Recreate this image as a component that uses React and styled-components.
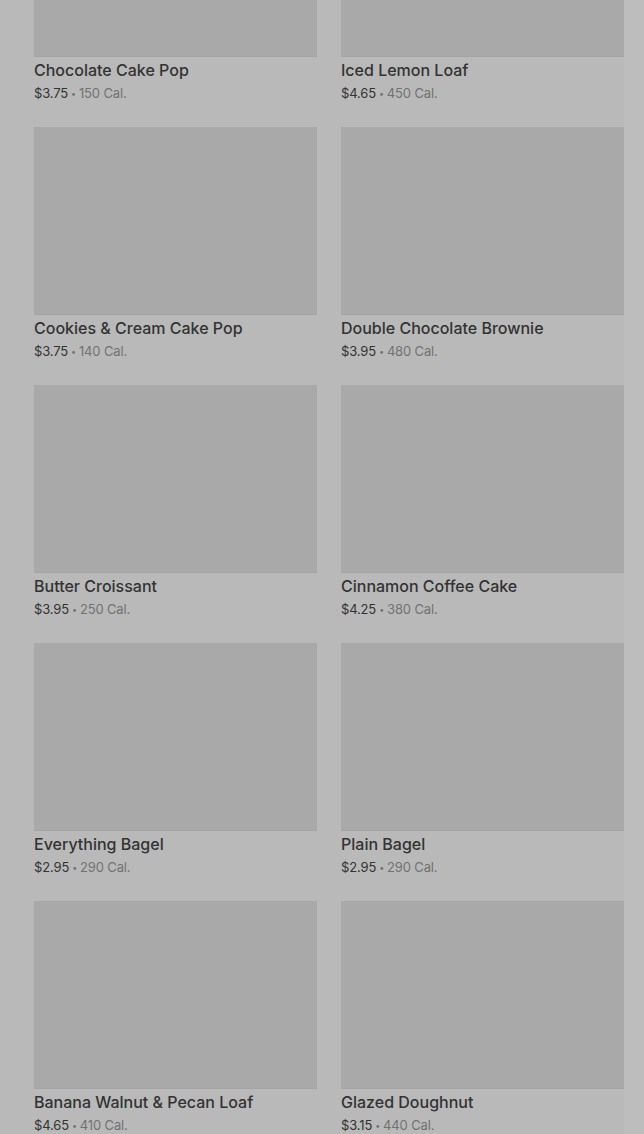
import React from 'react'
import styled, { createGlobalStyle } from 'styled-components'

const GlobalStyle = createGlobalStyle`
html, body {
  margin: 0;
  padding: 0;
  background: #b9b9b9;
  font-family: Inter, "Noto Sans", sans-serif;
  overflow: hidden;
}
`

const items = [
  { name: 'Chocolate Cake Pop', price: '$3.75', cal: 150 },
  { name: 'Iced Lemon Loaf', price: '$4.65', cal: 450 },
  { name: 'Cookies & Cream Cake Pop', price: '$3.75', cal: 140 },
  { name: 'Double Chocolate Brownie', price: '$3.95', cal: 480 },
  { name: 'Butter Croissant', price: '$3.95', cal: 250 },
  { name: 'Cinnamon Coffee Cake', price: '$4.25', cal: 380 },
  { name: 'Everything Bagel', price: '$2.95', cal: 290 },
  { name: 'Plain Bagel', price: '$2.95', cal: 290 },
  { name: 'Banana Walnut & Pecan Loaf', price: '$4.65', cal: 410 },
  { name: 'Glazed Doughnut', price: '$3.15', cal: 440 },
]

const Page = styled.div`
display: flex;
height: 1134px;
overflow: hidden;
`

const Main = styled.main`
flex: 1;
padding-left: 34px;
`

const Track = styled.div`
width: 20px;
background: #bdbdbd;
`

const Grid = styled.div`
display: grid;
grid-template-columns: 283px 283px;
column-gap: 24px;
row-gap: 25px;
margin-top: -131px;
`

const Card = styled.div`
display: flex;
flex-direction: column;
`

const Thumb = styled.div`
height: 188px;
background: #a9a9a9;
box-shadow: inset 0 -1px 0 #a4a4a4;
`

const Title = styled.div`
margin-top: 3px;
font-size: 16px;
line-height: 20px;
font-weight: 500;
color: #333;
`

const Meta = styled.div`
margin-top: 4px;
height: 18px;
font-size: 13px;
line-height: 18px;
color: #333;
letter-spacing: -0.15px;
`

const Dot = styled.span`
font-size: 9px;
line-height: 0;
margin: 0 3px;
vertical-align: 1px;
color: #727272;
`

const Cal = styled.span`
color: #727272;
`

const App = () => (
  <Page>
    <GlobalStyle />
    <Main>
      <Grid>
        {items.map(item => (
          <Card key={item.name}>
            <Thumb />
            <Title>{item.name}</Title>
            <Meta>
              {item.price}<Dot>•</Dot><Cal>{item.cal} Cal.</Cal>
            </Meta>
          </Card>
        ))}
      </Grid>
    </Main>
    <Track />
  </Page>
)

export default App
